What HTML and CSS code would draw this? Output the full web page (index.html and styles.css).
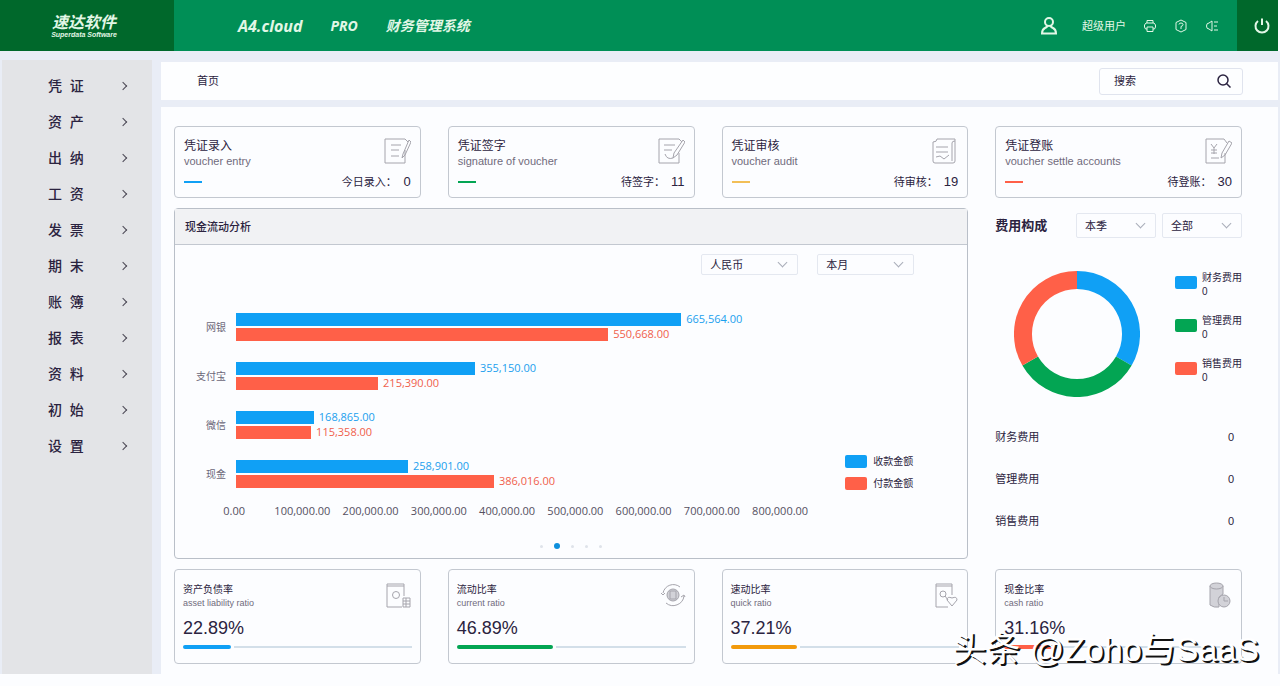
FILE: index.html
```html
<!DOCTYPE html>
<html lang="zh-CN">
<head>
<meta charset="utf-8">
<title>A4.cloud 财务管理系统</title>
<link rel="stylesheet" href="styles.css">
</head>
<body>
<header class="header">
<a href="#" class="logo"><b>速达软件</b><small>Superdata Software</small></a>
<div class="product">
<span class="product-name">A4.cloud</span>
<span class="edition">PRO</span>
<span class="system">财务管理系统</span>
</div>
<nav class="tools">
<svg class="user-icon" viewBox="0 0 18 20"><circle cx="9" cy="6" r="4"/><path d="M7 9.500Q7.500 11 5 12Q2 13.500 2 17.500h14Q16 13.500 13 12Q10.500 11 11 9.500"/></svg>
<a href="#">超级用户</a>
<button type="button" aria-label="打印"><svg viewBox="0 0 14 14"><path d="M4 4V1.500h6V4M4 10H2.500L1.500 8V6L3 4h8l1.500 2v2l-1 2H10M4 8h6v4.500H4z"/></svg></button>
<button type="button" aria-label="帮助"><svg viewBox="0 0 14 14"><path d="M7 1l5 2.500v7L7 13l-5-2.500v-7z"/><path d="M5 5.500Q5 4 7 4t2 1.500Q9 7 7 7.500V10"/></svg></button>
<button type="button" aria-label="公告"><svg viewBox="0 0 14 14"><path d="M7 2v10L4 10Q1.500 10 1.500 7T4 4zM9 3h4M9 7h3M9 11h4"/></svg></button>
</nav>
<button type="button" class="power" aria-label="退出"><svg viewBox="0 0 18 18"><path d="M5 4a6.500 6.500 0 1 0 8 0M9 1.500V8"/></svg></button>
</header>

<div class="layout">
<nav class="sidebar">
<a href="#">凭&nbsp;&nbsp;证</a>
<a href="#">资&nbsp;&nbsp;产</a>
<a href="#">出&nbsp;&nbsp;纳</a>
<a href="#">工&nbsp;&nbsp;资</a>
<a href="#">发&nbsp;&nbsp;票</a>
<a href="#">期&nbsp;&nbsp;末</a>
<a href="#">账&nbsp;&nbsp;簿</a>
<a href="#">报&nbsp;&nbsp;表</a>
<a href="#">资&nbsp;&nbsp;料</a>
<a href="#">初&nbsp;&nbsp;始</a>
<a href="#">设&nbsp;&nbsp;置</a>
</nav>

<main class="main">
<div class="topbar">
<a href="#">首页</a>
<form class="search">
<input type="text" placeholder="搜索" aria-label="搜索">
<button type="submit" aria-label="搜索"><svg viewBox="0 0 14 14"><circle cx="6" cy="6" r="5"/><path d="M9.500 9.500L13.500 13.500"/></svg></button>
</form>
</div>

<div class="content">
<!-- Voucher cards -->
<section class="card voucher">
<div class="card-top">
<div><h2>凭证录入</h2><p>voucher entry</p></div>
<svg class="card-icon" viewBox="0 0 28 28"><path d="M22 3H2v24h20V14M22 3l3 3"/><path d="M26 4l-6 14-1 4 3-3 6-13zM8 9h10M8 14h8M8 20h8"/></svg>
</div>
<div class="card-bottom"><i class="dash blue"></i><span>今日录入：</span><b>0</b></div>
</section>
<section class="card voucher">
<div class="card-top">
<div><h2>凭证签字</h2><p>signature of voucher</p></div>
<svg class="card-icon" viewBox="0 0 28 28"><path d="M22 3H2v24h20V17M22 3l3 3"/><path d="M26 4l-9 13-1 5 4-3 8-13zM7 9h11M7 14h8M8 18q2 6 8 4"/></svg>
</div>
<div class="card-bottom"><i class="dash green"></i><span>待签字：</span><b>11</b></div>
</section>
<section class="card voucher">
<div class="card-top">
<div><h2>凭证审核</h2><p>voucher audit</p></div>
<svg class="card-icon" viewBox="0 0 28 28"><path d="M7 3h18v22q0 2-2 2H5q-2 0-2-2V6q4 0 4-3zM25 5q-3 0-3 2v18"/><path d="M6 11h12M6 16h12M6 21l4-1 4 3 5-4"/></svg>
</div>
<div class="card-bottom"><i class="dash yellow"></i><span>待审核：</span><b>19</b></div>
</section>
<section class="card voucher">
<div class="card-top">
<div><h2>凭证登账</h2><p>voucher settle accounts</p></div>
<svg class="card-icon" viewBox="0 0 28 28"><path d="M20 3H2v24h19V17M20 3l3 4"/><path d="M25 5l-7 12-1 5 4-3 7-12zM7 8l3 4 3-4M10 12v6M7 14h6M7 17h6M7 22h8"/></svg>
</div>
<div class="card-bottom"><i class="dash red"></i><span>待登账：</span><b>30</b></div>
</section>

<!-- Cash flow -->
<section class="panel">
<h2 class="panel-title">现金流动分析</h2>
<div class="filters">
<span class="select"><select aria-label="币种"><option>人民币</option></select></span>
<span class="select"><select aria-label="期间"><option>本月</option></select></span>
</div>
<div class="chart">
<div class="rows">
<div class="row"><span>网银</span><div class="bars">
<div class="line blue-text"><i class="bar blue" style="width: 81.8%"></i>665,564.00</div>
<div class="line red-text"><i class="bar red" style="width: 68.4%"></i>550,668.00</div>
</div></div>
<div class="row"><span>支付宝</span><div class="bars">
<div class="line blue-text"><i class="bar blue" style="width: 43.9%"></i>355,150.00</div>
<div class="line red-text"><i class="bar red" style="width: 26.1%"></i>215,390.00</div>
</div></div>
<div class="row"><span>微信</span><div class="bars">
<div class="line blue-text"><i class="bar blue" style="width: 14.3%"></i>168,865.00</div>
<div class="line red-text"><i class="bar red" style="width: 13.8%"></i>115,358.00</div>
</div></div>
<div class="row"><span>现金</span><div class="bars">
<div class="line blue-text"><i class="bar blue" style="width: 31.6%"></i>258,901.00</div>
<div class="line red-text"><i class="bar red" style="width: 47.4%"></i>386,016.00</div>
</div></div>
<div class="axis">
<span>0.00</span><span>100,000.00</span><span>200,000.00</span><span>300,000.00</span><span>400,000.00</span><span>500,000.00</span><span>600,000.00</span><span>700,000.00</span><span>800,000.00</span>
</div>
</div>
<ul class="legend">
<li><i class="swatch blue"></i>收款金额</li>
<li><i class="swatch red"></i>付款金额</li>
</ul>
</div>
<div class="dots"><i></i><i class="active"></i><i></i><i></i><i></i></div>
</section>

<!-- Expenses -->
<section class="expense">
<div class="expense-head">
<h2>费用构成</h2>
<span class="select"><select aria-label="季度"><option>本季</option></select></span>
<span class="select"><select aria-label="范围"><option>全部</option></select></span>
</div>
<div class="donut-box">
<svg class="donut" viewBox="0 0 126 126">
<g fill="none" stroke-width="18">
<path stroke="#10a0f5" d="M63 9A54 54 0 0 1 109.800 90"/>
<path stroke="#03a553" d="M109.800 90A54 54 0 0 1 16.200 90"/>
<path stroke="#ff6048" d="M16.200 90A54 54 0 0 1 63 9"/>
</g>
</svg>
<ul class="donut-legend">
<li><i class="swatch blue"></i><span>财务费用<br>0</span></li>
<li><i class="swatch green"></i><span>管理费用<br>0</span></li>
<li><i class="swatch red"></i><span>销售费用<br>0</span></li>
</ul>
</div>
<table class="expense-table">
<tr><th>财务费用</th><td>0</td></tr>
<tr><th>管理费用</th><td>0</td></tr>
<tr><th>销售费用</th><td>0</td></tr>
</table>
</section>

<!-- Ratio cards -->
<section class="card ratio">
<div class="card-top">
<div><h2>资产负债率</h2><p>asset liability ratio</p></div>
<svg class="card-icon" viewBox="0 0 28 28"><path d="M18 26H3V3h17v12M3 5h17"/><circle cx="12" cy="14" r="3.500"/><path d="M19 17h7v9h-7zM19 20h7M19 23h7M22 17v9"/></svg>
</div>
<strong>22.89%</strong>
<div class="track"><i class="blue" style="width: 21%"></i></div>
</section>
<section class="card ratio">
<div class="card-top">
<div><h2>流动比率</h2><p>current ratio</p></div>
<svg class="card-icon" viewBox="0 0 28 28"><circle cx="15" cy="14" r="6" class="shade"/><path d="M12 10h6v8h-6zM5 12A10.500 10.500 0 0 1 22 6M26 15A11 11 0 0 1 8 22M3 12l2 2 2-2M23 16l3-2 1 2"/></svg>
</div>
<strong>46.89%</strong>
<div class="track"><i class="green" style="width: 42%"></i></div>
</section>
<section class="card ratio">
<div class="card-top">
<div><h2>速动比率</h2><p>quick ratio</p></div>
<svg class="card-icon" viewBox="0 0 28 28"><path d="M17 26H5V3h16v11M5 5h16"/><circle cx="12" cy="13" r="3"/><path d="M14 15l3 4M21 25l-5-6q0-4 5-2 5-2 5 2z"/></svg>
</div>
<strong>37.21%</strong>
<div class="track"><i class="orange" style="width: 29%"></i></div>
</section>
<section class="card ratio">
<div class="card-top">
<div><h2>现金比率</h2><p>cash ratio</p></div>
<svg class="card-icon" viewBox="0 0 28 28"><path class="shade" d="M5 5v19q4 3 9 2V16l4-3V5"/><ellipse class="shade" cx="11.500" cy="5" rx="6.500" ry="3"/><circle class="shade" cx="19" cy="20" r="6"/><path d="M19 16v4h4"/></svg>
</div>
<strong>31.16%</strong>
<div class="track"><i class="red" style="width: 23%"></i></div>
</section>
</div>
</main>
</div>
<div class="watermark">头条 @Zoho与SaaS</div>
</body>
</html>
```
FILE: styles.css
```css
* { box-sizing: border-box; }
body { margin: 0; background: #fcfdff; color: #2b2340; font: 11px/14px "Liberation Sans", "Noto Sans CJK SC", sans-serif; }
h2, p, ul { margin: 0; padding: 0; }
ul { list-style: none; }
a { color: inherit; text-decoration: none; }
button { border: 0; padding: 0; background: none; color: inherit; display: flex; cursor: pointer; }
svg { fill: none; stroke: currentColor; display: block; }

.blue { background: #10a0f5; }
.green { background: #03a553; }
.yellow { background: #f2bf57; }
.orange { background: #f29a0c; }
.red { background: #ff6048; }
.blue-text { color: #1ba0ee; }
.red-text { color: #f0604c; }

.header { display: flex; align-items: center; height: 51px; margin-right: 2px; background: #008f56; color: #e2f7e6; }
.logo { width: 174px; height: 51px; padding-right: 6px; background: #00682b; display: flex; flex-direction: column; align-items: center; justify-content: center; font-style: italic; }
.logo b { font-size: 16px; line-height: 18px; }
.logo small { font-size: 7px; line-height: 6px; font-weight: bold; }
.product { display: flex; align-items: center; gap: 28px; flex: 1; padding-left: 64px; font-family: "Open Sans", "Noto Sans CJK SC", sans-serif; font-style: italic; font-weight: bold; }
.product-name { font-size: 16px; }
.edition { font-size: 14px; }
.system { font-size: 14px; }
.tools { display: flex; align-items: center; gap: 17px; padding-right: 18px; }
.tools a { padding-left: 7px; }
.tools svg { width: 14px; height: 14px; }
.tools .user-icon { width: 18px; height: 20px; stroke-width: 2; }
.power { width: 41px; height: 51px; padding-left: 9px; background: #00682b; align-items: center; justify-content: center; }
.power svg { width: 18px; height: 18px; stroke-width: 2; }

.layout { display: flex; gap: 9px; padding: 9px 2px 0; background: #e9edf6; }
.sidebar { width: 150px; padding-top: 8px; background: #e3e4e7; }
.sidebar a { display: flex; justify-content: space-between; align-items: center; height: 36px; padding: 0 26px 0 46px; font-size: 14px; font-weight: 500; }
.sidebar a::after { content: ""; width: 5px; height: 5px; border: solid #4a4654; border-width: 1px 1px 0 0; transform: rotate(45deg); }

.main { flex: 1; padding-top: 2px; min-width: 0; }
.topbar { display: flex; align-items: center; justify-content: space-between; height: 38px; margin-bottom: 7px; padding: 0 35px 0 36px; background: #fdfeff; }
.search { display: flex; align-items: center; width: 144px; height: 27px; padding: 0 11px 0 14px; border: 1px solid #e0e4ee; border-radius: 3px; }
.search input { flex: 1; min-width: 0; border: 0; padding: 0; background: none; font: inherit; outline: 0; }
.search input::placeholder { color: #2b2340; }
.search svg { width: 14px; height: 14px; stroke-width: 1.5; }

.content { display: grid; grid-template-columns: repeat(4, 1fr); column-gap: 27px; row-gap: 10px; padding: 19px 36px 10px 13px; background: #fcfdff; }
.card { border: 1px solid #c3c8d0; border-radius: 4px; padding: 9px; }
.card-top { display: flex; justify-content: space-between; }
.card h2 { font-weight: normal; }
.card p { color: #706b7c; line-height: 12px; }
.card-icon { width: 28px; height: 28px; color: #a5a4ac; }
.card-icon .shade { fill: #d2d2d8; }
.voucher { height: 72px; }
.voucher h2 { font-size: 12px; line-height: 20px; }
.voucher p { line-height: 10px; }
.card-bottom { display: flex; align-items: center; height: 32px; }
.card-bottom b { min-width: 8px; font-size: 13px; font-weight: 500; text-align: right; }
.card-bottom span { margin-right: 6px; }
.dash { width: 18px; height: 2px; margin-right: auto; }
.ratio { height: 95px; padding: 11px 8px; }
.ratio h2 { font-size: 10px; line-height: 18px; }
.ratio p { font-size: 9px; line-height: 8px; }
.ratio strong { display: block; padding: 11px 0 9px; font-size: 18px; line-height: 16px; font-weight: normal; }
.track { display: flex; align-items: center; gap: 3px; height: 4px; }
.track i { height: 4px; border-radius: 2px; }
.track::after { content: ""; flex: 1; height: 2px; background: #d3dfe9; }

.select { position: relative; display: block; width: 97px; }
.select select { appearance: none; width: 100%; height: 21px; padding: 0 8px; border: 1px solid #e4e8f0; border-radius: 2px; background: none; color: inherit; font: inherit; }
.select::after { content: ""; position: absolute; right: 12px; top: 5px; width: 6px; height: 6px; border: solid #a9adb9; border-width: 0 1px 1px 0; transform: rotate(45deg); pointer-events: none; }

.panel { grid-column: span 3; height: 351px; border: 1px solid #b9bfc8; border-radius: 4px; }
.panel-title { padding: 0 10px; height: 36px; border-bottom: 1px solid #c3c8d0; background: #f1f2f4; font-size: 11px; line-height: 36px; font-weight: 500; }
.filters { display: flex; justify-content: flex-end; gap: 19px; padding: 9px 53px 0 0; }
.chart { display: flex; gap: 53px; padding: 27px 54px 0 19px; font-family: "Open Sans", "Noto Sans CJK SC", sans-serif; }
.rows { flex: 1; }
.row { display: flex; align-items: center; height: 49px; }
.row > span { width: 32px; margin-right: 10px; text-align: right; font-size: 10px; color: #6b6678; }
.bars { flex: 1; margin-right: 12px; }
.line { display: flex; align-items: center; gap: 5px; height: 13px; }
.line + .line { margin-top: 2px; }
.bar { height: 13px; }
.axis { display: flex; margin: 5px -22px 0 6px; color: #55505f; font-size: 11px; line-height: 16px; }
.axis span { flex: 1; text-align: center; }
.legend { align-self: flex-end; padding-bottom: 25px; }
.legend li { display: flex; align-items: center; gap: 6px; height: 22px; font-size: 10px; }
.swatch { width: 22px; height: 13px; border-radius: 2px; }
.dots { display: flex; justify-content: center; align-items: center; gap: 11px; height: 54px; }
.dots i { width: 3px; height: 3px; border-radius: 50%; background: #dfe3ea; }
.dots .active { width: 6px; height: 6px; background: #0d8fdc; }

.expense-head { display: flex; align-items: center; gap: 6px; padding-top: 5px; }
.expense-head h2 { flex: 1; font-size: 13px; }
.expense-head .select { width: 80px; }
.expense-head select { height: 25px; }
.expense-head .select::after { top: 7px; }
.donut-box { display: flex; justify-content: space-between; padding: 33px 0 0 19px; }
.donut { width: 126px; height: 126px; }
.donut-legend li { display: flex; gap: 5px; height: 43px; font-size: 10px; }
.donut-legend .swatch { margin-top: 5px; }
.expense-table { width: 100%; margin-top: 16px; border-collapse: collapse; }
.expense-table th, .expense-table td { height: 42px; padding: 0 8px 0 0; font-weight: normal; text-align: left; }
.expense-table td { text-align: right; }

.watermark { position: absolute; right: 21px; bottom: 17px; color: #fff; font-size: 34px; line-height: 40px; text-shadow: 2px 2px 0 #111; }
```
